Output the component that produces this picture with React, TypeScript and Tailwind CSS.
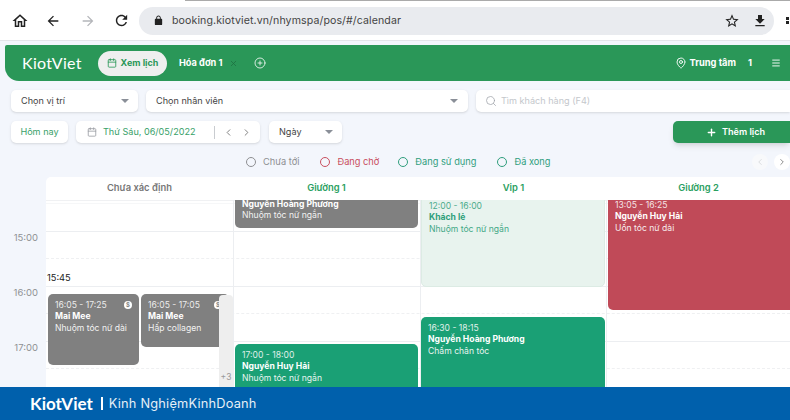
import { Calendar, ChevronLeft, ChevronRight, CirclePlus, MapPin, Menu, Plus, Search, X } from 'lucide-react';

const font = 'font-["Inter","Noto_Sans",sans-serif]';

function MaterialIcon({ d, className }: { d: string; className: string }) {
  return (
    <svg viewBox="0 0 24 24" className={className} fill="currentColor">
      <path d={d} />
    </svg>
  );
}

function Caret() {
  return <span className="border-x-[4px] border-t-[4px] border-x-transparent border-t-[#8a8f98]" />;
}

function LegendItem({ label, className }: { label: string; className: string }) {
  return (
    <div className={`flex items-center gap-[7px] text-[9.25px] ${className}`}>
      <span className="h-[10px] w-[10px] rounded-full border border-current" />
      {label}
    </div>
  );
}

type EventProps = {
  className: string;
  time?: string;
  name: string;
  service: string;
  badge?: boolean;
};

function EventCard({ className, time, name, service, badge }: EventProps) {
  return (
    <div className={`absolute overflow-hidden whitespace-nowrap rounded-[5px] px-[7px] pt-[6px] text-[8.6px] leading-[11.3px] ${className}`}>
      {time && <div className="opacity-85">{time}</div>}
      <div className="font-bold">{name}</div>
      <div className="opacity-90">{service}</div>
      {badge && (
        <span className="absolute right-[7px] top-[7px] flex h-[8px] w-[8px] items-center justify-center rounded-full bg-white text-[6px] font-bold text-[#808080]">
          $
        </span>
      )}
    </div>
  );
}

function Column({ title, className, width }: { title: string; className: string; width: string }) {
  return (
    <div className={`flex h-full shrink-0 items-center justify-center text-[9.4px] font-semibold ${width} ${className}`}>
      {title}
    </div>
  );
}

function HourRow() {
  return (
    <div className="h-[55px] border-t border-[#eceef1]">
      <div className="mt-[26px] border-t border-dashed border-[#eff0f2]" />
    </div>
  );
}

export default function App() {
  return (
    <div className={`relative h-[420px] w-[790px] overflow-hidden bg-[#f3f6fc] text-[#444] ${font}`}>
      {/* browser chrome */}
      <div className="relative flex h-[41px] items-center border-b border-[#e3e5ea] bg-white pt-[1px]">
        <div className="absolute left-[185px] right-0 top-0 h-px bg-[#aaaaaa]" />
        <MaterialIcon className="ml-[11px] h-[18px] w-[18px] text-[#222]" d="M12 5.69l5 4.5V18h-2v-6H9v6H7v-7.81l5-4.5M12 3L2 12h3v8h6v-6h2v6h6v-8h3L12 3z" />
        <MaterialIcon className="ml-[16px] h-[16px] w-[16px] text-[#222]" d="M20 11H7.83l5.59-5.59L12 4l-8 8 8 8 1.41-1.41L7.83 13H20v-2z" />
        <MaterialIcon className="ml-[19px] h-[16px] w-[16px] text-[#b4b6ba]" d="M12 4l-1.41 1.41L16.17 11H4v2h12.17l-5.58 5.59L12 20l8-8z" />
        <MaterialIcon className="ml-[17px] h-[17px] w-[17px] text-[#222]" d="M17.65 6.35C16.2 4.9 14.21 4 12 4c-4.42 0-7.99 3.58-7.99 8s3.57 8 7.99 8c3.73 0 6.84-2.55 7.73-6h-2.08c-.82 2.33-3.04 4-5.65 4-3.31 0-6-2.69-6-6s2.69-6 6-6c1.66 0 3.14.69 4.22 1.78L13 11h7V4l-2.35 2.35z" />
        <div className="ml-[9px] flex h-[28px] w-[635px] items-center rounded-full bg-[#e9ebef] pl-[14px] pr-[6px]">
          <MaterialIcon className="h-[11px] w-[11px] text-[#222]" d="M18 8h-1V6c0-2.76-2.24-5-5-5S7 3.24 7 6v2H6c-1.1 0-2 .9-2 2v10c0 1.1.9 2 2 2h12c1.1 0 2-.9 2-2V10c0-1.1-.9-2-2-2zM9 6c0-1.66 1.34-3 3-3s3 1.34 3 3v2H9V6z" />
          <span className="ml-[8px] text-[10.6px] tracking-[0.1px] text-[#444]">booking.kiotviet.vn/nhymspa/pos/#/calendar</span>
          <MaterialIcon className="ml-auto h-[16px] w-[16px] text-[#222]" d="M22 9.24l-7.19-.62L12 2 9.19 8.63 2 9.24l5.46 4.73L5.82 21 12 17.27 18.18 21l-1.63-7.03L22 9.24zM12 15.4l-3.76 2.27 1-4.28-3.32-2.88 4.38-.38L12 6.1l1.71 4.04 4.38.38-3.32 2.88 1 4.28L12 15.4z" />
          <MaterialIcon className="ml-[12px] h-[16px] w-[16px] text-[#222]" d="M19 9h-4V3H9v6H5l7 7 7-7zM5 18v2h14v-2H5z" />
        </div>
        <div className="ml-[12px] flex flex-col gap-[1.5px]">
          <span className="h-[3px] w-[3px] bg-[#222]" />
          <span className="h-[3px] w-[3px] bg-[#222]" />
        </div>
      </div>

      {/* green header */}
      <div className="ml-[5px] mt-[4px] flex h-[36px] items-center rounded-bl-[14px] rounded-tl-[2px] bg-[#2a9758] text-white">
        <span className="ml-[17px] w-[76px] font-['Lato',sans-serif] text-[16px] leading-none tracking-[0.3px]">KiotViet</span>
        <div className="flex h-[25px] w-[69px] items-center justify-center gap-[4px] rounded-full bg-[#efefef] text-[9px] font-bold text-[#2a9758]">
          <Calendar size={10} strokeWidth={2} />
          Xem lịch
        </div>
        <span className="ml-[12px] text-[9.2px] font-bold">Hóa đơn 1</span>
        <X size={9} className="ml-[7px] text-[#1d6f40]" strokeWidth={2} />
        <CirclePlus size={12} className="ml-[16px]" strokeWidth={1.6} />
        <MapPin size={12} className="ml-auto" strokeWidth={1.8} />
        <span className="ml-[3px] text-[9.3px] font-bold">Trung tâm</span>
        <span className="ml-[12px] text-[9.3px] font-bold">1</span>
        <Menu size={10} className="ml-[19px] mr-[9px]" strokeWidth={2.2} />
      </div>

      {/* filters */}
      <div className="ml-[11px] mt-[9px] flex gap-[8px] text-[9.1px]">
        <div className="flex h-[22px] w-[127px] items-center justify-between rounded-[5px] bg-white pl-[10px] pr-[9px] shadow-sm">
          Chọn vị trí
          <Caret />
        </div>
        <div className="flex h-[22px] w-[322px] items-center justify-between rounded-[5px] bg-white pl-[10px] pr-[10px] shadow-sm">
          Chọn nhân viên
          <Caret />
        </div>
        <div className="flex h-[22px] flex-1 items-center gap-[4px] rounded-l-[5px] bg-white pl-[9px] text-[#c4c7cc] shadow-sm">
          <Search size={12} strokeWidth={1.5} className="text-[#9ea2a8]" />
          Tìm khách hàng (F4)
        </div>
      </div>

      {/* toolbar */}
      <div className="ml-[11px] mt-[9px] flex h-[22px] whitespace-nowrap text-[9.1px]">
        <div className="flex w-[57px] items-center justify-center rounded-[5px] bg-white text-[#38a169] shadow-sm">Hôm nay</div>
        <div className="ml-[8px] flex w-[184px] items-center rounded-[5px] bg-white pl-[11px] shadow-sm">
          <Calendar size={10} className="text-[#9a9ea4]" />
          <span className="ml-[6px] text-[#38a169]">Thứ Sáu, 06/05/2022</span>
          <span className="ml-[18px] h-[13px] w-px bg-[#c9ccd0]" />
          <ChevronLeft size={11} className="ml-[8px] text-[#777]" />
          <ChevronRight size={11} className="ml-[7px] text-[#777]" />
        </div>
        <div className="ml-[9px] flex w-[73px] items-center justify-between rounded-[5px] bg-white pl-[10px] pr-[9px] shadow-sm">
          Ngày
          <Caret />
        </div>
        <div className="ml-auto flex w-[117px] items-center gap-[5px] rounded-l-[5px] bg-[#2a9758] pl-[33px] font-semibold text-white shadow-md">
          <Plus size={11} strokeWidth={3} />
          Thêm lịch
        </div>
      </div>

      {/* legend */}
      <div className="relative mt-[4px] flex h-[30px] items-center pl-[246px]">
        <LegendItem label="Chưa tới" className="text-[#8e8f92]" />
        <LegendItem label="Đang chờ" className="ml-[21px] text-[#c94f5f]" />
        <LegendItem label="Đang sử dụng" className="ml-[19px] text-[#2f9e7c]" />
        <LegendItem label="Đã xong" className="ml-[21px] text-[#2f9e7c]" />
        <span className="absolute left-[752px] top-[7px] flex h-[16px] w-[16px] items-center justify-center rounded-full bg-[#f8f9fb] text-[#d5d7da]">
          <ChevronLeft size={10} />
        </span>
        <span className="absolute left-[774px] top-[7px] flex h-[16px] w-[16px] items-center justify-center rounded-full bg-white text-[#777]">
          <ChevronRight size={10} />
        </span>
      </div>

      {/* calendar */}
      <div className="ml-[46px] flex h-[23px] items-center overflow-hidden rounded-tl-[5px] bg-white">
        <Column title="Chưa xác định" width="w-[187px]" className="text-[#777]" />
        <Column title="Giường 1" width="w-[187px]" className="text-[#2aa05f]" />
        <Column title="Vip 1" width="w-[187px]" className="text-[#2aa05f]" />
        <Column title="Giường 2" width="w-[183px]" className="text-[#2aa05f]" />
      </div>
      <div className="flex">
        <div className="w-[46px] shrink-0 pr-[8px] pt-[32px] text-right text-[9.5px] leading-[12px] text-[#8f9194]">
          <div className="h-[55px]">15:00</div>
          <div className="h-[55px]">16:00</div>
          <div className="h-[55px]">17:00</div>
        </div>
        <div className="relative h-[187px] flex-1 overflow-hidden bg-white">
          <div className="pt-[31px]">
            <div className="absolute inset-x-0 top-0 border-t border-[#f0f1f3]" />
            <div className="absolute inset-x-0 top-[3px] border-t border-[#f6f7f8]" />
            <HourRow />
            <HourRow />
            <HourRow />
          </div>
          <div className="absolute inset-y-0 left-[187px] w-px bg-[#eceef1]" />
          <div className="absolute inset-y-0 left-[374px] w-px bg-[#eceef1]" />
          <div className="absolute inset-y-0 left-[560px] w-px bg-[#eceef1]" />

          <span className="absolute left-[1px] top-[72px] text-[9.3px] leading-[12px] text-[#222]">15:45</span>

          <EventCard
            className="-top-[7px] left-[189px] h-[35px] w-[183px] bg-[#808080] text-white"
            name="Nguyễn Hoàng Phương"
            service="Nhuộm tóc nữ ngắn"
          />
          <EventCard
            className="-top-[6px] left-[375px] h-[93px] w-[184px] border border-[#dcebe4] bg-[#e8f3ee] text-[#2fa07a]"
            time="12:00 - 16:00"
            name="Khách lẻ"
            service="Nhuộm tóc nữ ngắn"
          />
          <EventCard
            className="-top-[6px] left-[562px] h-[116px] w-[182px] rounded-r-none bg-[#c04a58] text-white"
            time="13:05 - 16:25"
            name="Nguyễn Huy Hải"
            service="Uốn tóc nữ dài"
          />
          <EventCard
            className="left-[2px] top-[94px] h-[71px] w-[91px] bg-[#808080] text-white"
            time="16:05 - 17:25"
            name="Mai Mee"
            service="Nhuộm tóc nữ dài"
            badge
          />
          <EventCard
            className="left-[95px] top-[94px] h-[53px] w-[88px] bg-[#808080] text-white"
            time="16:05 - 17:05"
            name="Mai Mee"
            service="Hấp collagen"
            badge
          />
          <div className="absolute left-[173px] top-[95px] flex h-[100px] w-[14px] items-start justify-center rounded-t-[4px] bg-[#eeeeee] pt-[76px] text-[8.5px] text-[#9a9a9a]">
            +3
          </div>
          <EventCard
            className="left-[189px] top-[144px] h-[60px] w-[183px] bg-[#1aa075] text-white"
            time="17:00 - 18:00"
            name="Nguyễn Huy Hải"
            service="Nhuộm tóc nữ ngắn"
          />
          <EventCard
            className="left-[375px] top-[117px] h-[90px] w-[184px] bg-[#1aa075] text-white"
            time="16:30 - 18:15"
            name="Nguyễn Hoàng Phương"
            service="Chấm chân tóc"
          />
        </div>
      </div>

      {/* footer banner */}
      <div className="absolute inset-x-0 bottom-0 flex h-[33px] items-center bg-[#0060ac] pl-[30px] text-white">
        <span className="font-['Lato',sans-serif] text-[17px] font-bold leading-none">KiotViet</span>
        <span className="ml-[8px] h-[13px] w-[2px] bg-white" />
        <span className="ml-[6px] text-[12.8px] tracking-[0.2px] text-[#e6eff7]">Kinh NghiệmKinhDoanh</span>
      </div>
    </div>
  );
}
